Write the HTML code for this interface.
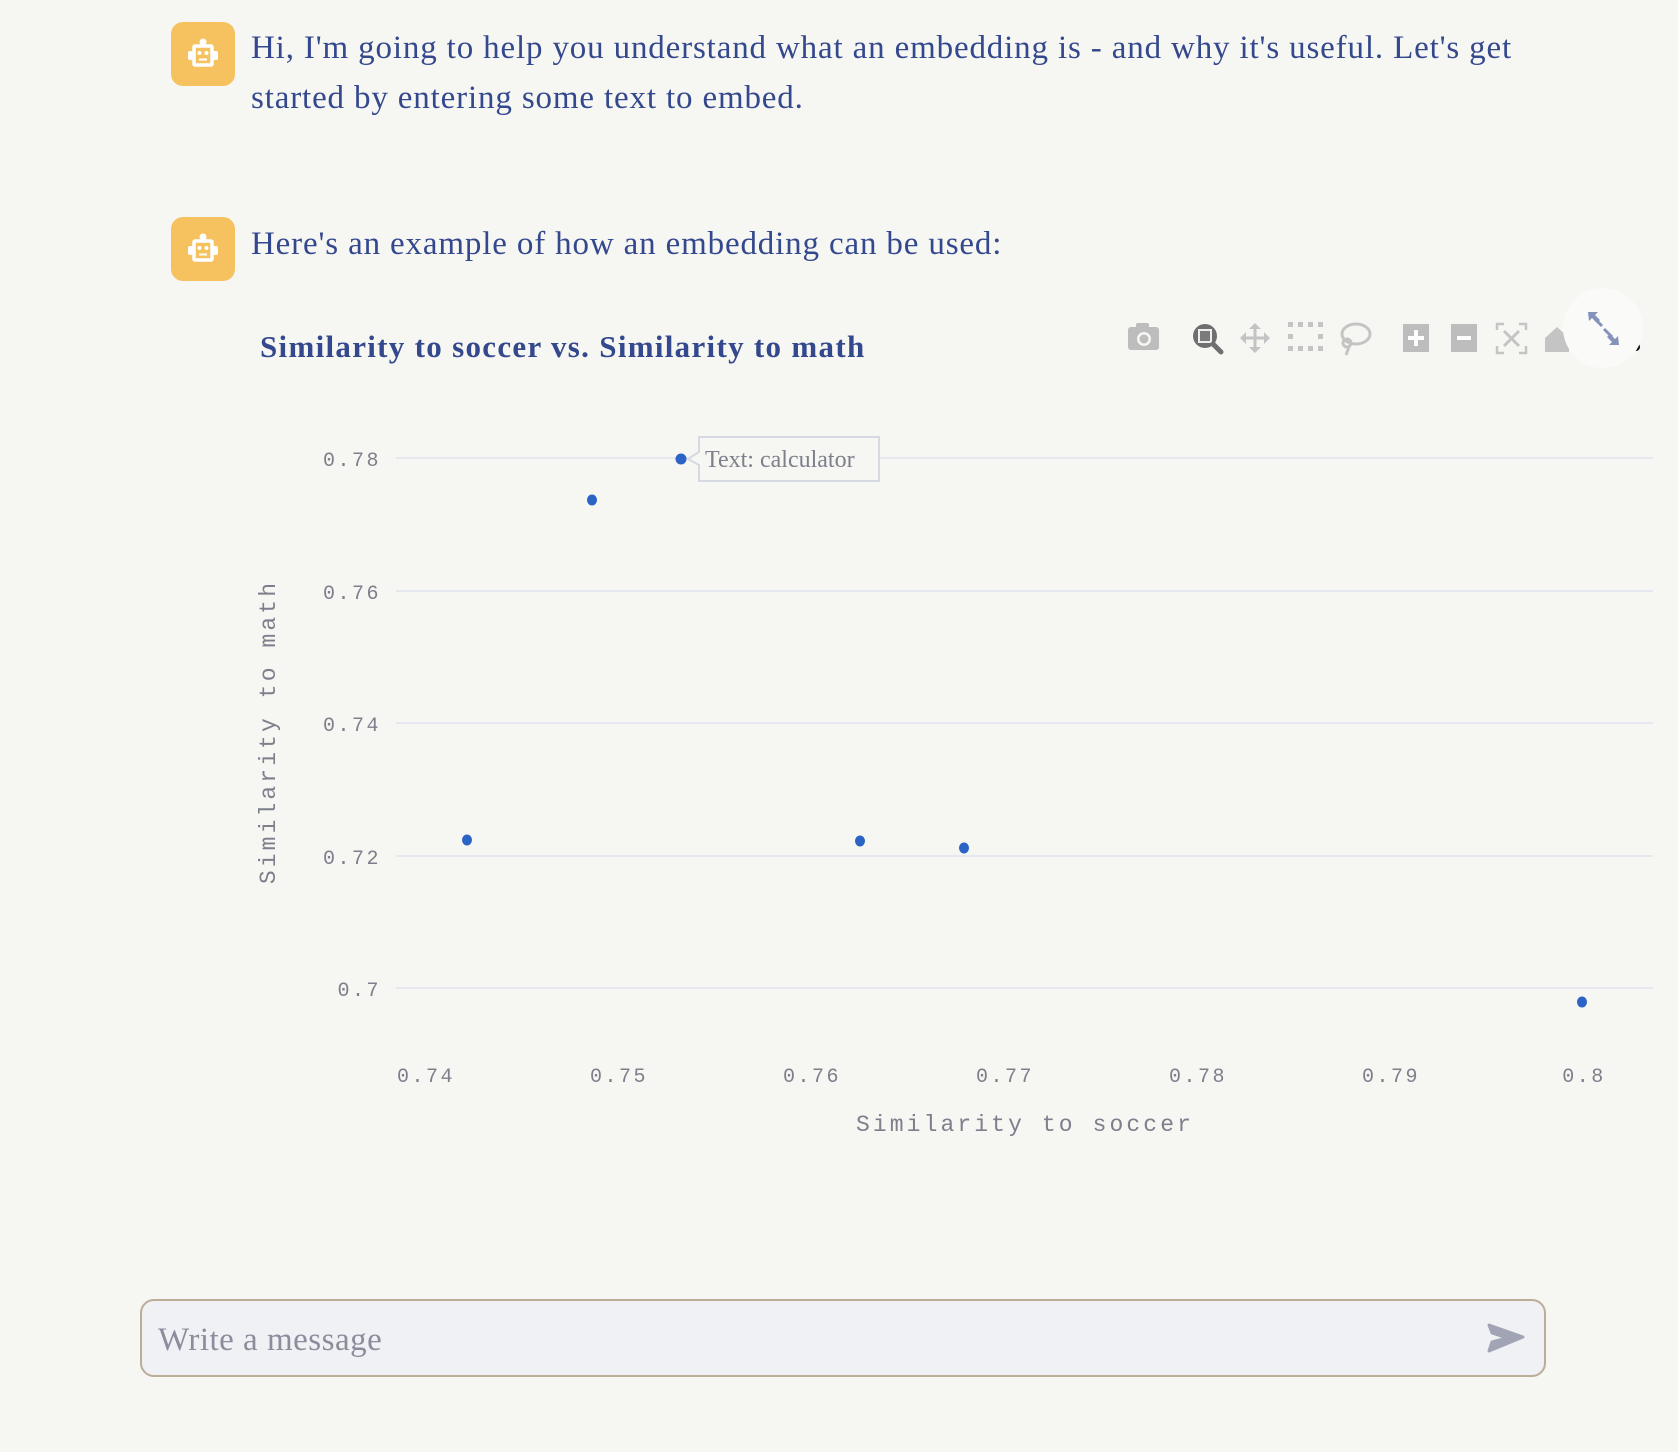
<!DOCTYPE html>
<html><head><meta charset="utf-8">
<style>
html,body{margin:0;padding:0;background:#f6f6f2;}
body{width:1678px;height:1452px;position:relative;overflow:hidden;font-family:"Liberation Serif",serif;color:#34488d;}
.av{position:absolute;left:171px;width:64px;height:64px;border-radius:12px;background:#f6c260;}
.av svg{position:absolute;left:14px;top:14px;}
.msg{position:absolute;left:251px;font-size:33px;letter-spacing:0.85px;line-height:50px;white-space:nowrap;}
.title{position:absolute;left:260px;top:329px;font-size:31px;font-weight:bold;letter-spacing:1.3px;white-space:nowrap;}
.input{position:absolute;left:140px;top:1299px;width:1402px;height:74px;border:2px solid #bcad99;border-radius:14px;background:#f0f1f4;}
.input span{position:absolute;left:16px;top:21px;font-size:33px;color:#8b8d9c;letter-spacing:0.5px;}
</style></head><body>

<div class="av" style="top:22px"><svg width="36" height="36" viewBox="0 0 36 36"><g fill="none" stroke="#fff" stroke-width="3.5"><rect x="9" y="10" width="18" height="19" rx="1"/></g><circle cx="18" cy="6" r="3.5" fill="#fff"/><rect x="3" y="15" width="5" height="9" rx="2" fill="#fff"/><rect x="28" y="15" width="5" height="9" rx="2" fill="#fff"/><circle cx="14.5" cy="17" r="2" fill="#fff"/><circle cx="21.5" cy="17" r="2" fill="#fff"/><rect x="14" y="22.5" width="8" height="2" fill="#fff"/></svg></div>
<div class="msg" style="top:23px">Hi, I'm going to help you understand what an embedding is - and why it's useful. Let's get<br>started by entering some text to embed.</div>

<div class="av" style="top:217px"><svg width="36" height="36" viewBox="0 0 36 36"><g fill="none" stroke="#fff" stroke-width="3.5"><rect x="9" y="10" width="18" height="19" rx="1"/></g><circle cx="18" cy="6" r="3.5" fill="#fff"/><rect x="3" y="15" width="5" height="9" rx="2" fill="#fff"/><rect x="28" y="15" width="5" height="9" rx="2" fill="#fff"/><circle cx="14.5" cy="17" r="2" fill="#fff"/><circle cx="21.5" cy="17" r="2" fill="#fff"/><rect x="14" y="22.5" width="8" height="2" fill="#fff"/></svg></div>
<div class="msg" style="top:219px">Here's an example of how an embedding can be used:</div>

<div class="title">Similarity to soccer vs. Similarity to math</div>

<div class="input"><span>Write a message</span></div>

<svg style="position:absolute;left:0;top:0" width="1678" height="1452">
 <g fill="#bdbdbd">
  <rect x="1128" y="327" width="31" height="23" rx="3"/><rect x="1136" y="323" width="13" height="6" rx="2"/>
  <circle cx="1144" cy="339" r="7" fill="#f6f6f2"/><circle cx="1144" cy="339" r="4.5"/>
 </g>
 <g><circle cx="1205" cy="336" r="12" fill="#6f6f6f"/><rect x="1199" y="330" width="12" height="12" fill="#7a7a7a" stroke="#eee" stroke-width="2"/><line x1="1213" y1="344" x2="1221" y2="352" stroke="#6f6f6f" stroke-width="5" stroke-linecap="round"/></g>
 <g stroke="#c4c4c4" stroke-width="3" fill="#c4c4c4"><line x1="1242" y1="338" x2="1268" y2="338"/><line x1="1255" y1="325" x2="1255" y2="351"/>
  <path d="M1240 338l6-6v12z M1270 338l-6-6v12z M1255 323l-6 6h12z M1255 353l-6-6h12z" stroke="none"/></g>
 <g fill="#c4c4c4"><rect x="1288" y="322" width="5" height="5"/><rect x="1298" y="322" width="5" height="5"/><rect x="1308" y="322" width="5" height="5"/><rect x="1318" y="322" width="5" height="5"/>
  <rect x="1288" y="346" width="5" height="5"/><rect x="1298" y="346" width="5" height="5"/><rect x="1308" y="346" width="5" height="5"/><rect x="1318" y="346" width="5" height="5"/>
  <rect x="1288" y="334" width="5" height="5"/><rect x="1318" y="334" width="5" height="5"/></g>
 <g fill="none" stroke="#c4c4c4" stroke-width="3"><ellipse cx="1356" cy="334" rx="14" ry="10"/><circle cx="1347" cy="343" r="4"/><path d="M1349 347l-3 8"/></g>
 <rect x="1403" y="324" width="26" height="28" fill="#bdbdbd"/><path d="M1416 330v16M1408 338h16" stroke="#fff" stroke-width="4"/>
 <rect x="1451" y="324" width="26" height="28" fill="#bdbdbd"/><path d="M1457 338h14" stroke="#fff" stroke-width="4"/>
 <g fill="none" stroke="#c4c4c4" stroke-width="2.5"><path d="M1497 330v-6h7M1519 324h7v6M1526 346v7h-7M1504 353h-7v-7"/><path d="M1504 331l15 15M1519 331l-15 15" stroke-width="3"/></g>
 <path d="M1545 338l12-11 12 11v14h-24z" fill="#c4c4c4"/>
 <circle cx="1636" cy="347" r="4" fill="#111"/>
 <circle cx="1603" cy="328" r="40" fill="#fafaf8"/>
 <g fill="#8593bb"><path d="M1588 312h10l-3 3 5 5-3 3-5-5-3 3z"/><path d="M1619 345h-10l3-3-5-5 3-3 5 5 3-3z"/><path d="M1594 318l8 8" stroke="#8593bb" stroke-width="3"/><path d="M1604 329l8 8" stroke="#8593bb" stroke-width="3"/></g>

 <g stroke="#e5e8ef" stroke-width="2">
  <line x1="396" y1="458" x2="1653" y2="458"/><line x1="396" y1="591" x2="1653" y2="591"/>
  <line x1="396" y1="723" x2="1653" y2="723"/><line x1="396" y1="856" x2="1653" y2="856"/>
  <line x1="396" y1="988" x2="1653" y2="988"/>
 </g>
 <g font-family="Liberation Mono, monospace" font-size="20" letter-spacing="2.5" fill="#7d7f8c" text-anchor="end">
  <text x="381" y="466">0.78</text><text x="381" y="599">0.76</text><text x="381" y="731">0.74</text>
  <text x="381" y="864">0.72</text><text x="381" y="996">0.7</text>
 </g>
 <g font-family="Liberation Mono, monospace" font-size="20" letter-spacing="2.5" fill="#7d7f8c" text-anchor="middle">
  <text x="426" y="1082">0.74</text><text x="619" y="1082">0.75</text><text x="812" y="1082">0.76</text>
  <text x="1005" y="1082">0.77</text><text x="1198" y="1082">0.78</text><text x="1391" y="1082">0.79</text>
  <text x="1584" y="1082">0.8</text>
 </g>
 <text x="1025" y="1131" font-family="Liberation Mono, monospace" font-size="23" letter-spacing="3.1" fill="#7d7f8c" text-anchor="middle">Similarity to soccer</text>
 <text transform="translate(275,732) rotate(-90)" font-family="Liberation Mono, monospace" font-size="23" letter-spacing="3.1" fill="#7d7f8c" text-anchor="middle">Similarity to math</text>

 <g fill="#2b63c7">
  <ellipse cx="467" cy="840" rx="5" ry="5.5"/><ellipse cx="592" cy="500" rx="5" ry="5.5"/>
  <ellipse cx="681" cy="459" rx="5.5" ry="5.5"/><ellipse cx="860" cy="841" rx="5" ry="5.5"/>
  <ellipse cx="964" cy="848" rx="5" ry="5.5"/><ellipse cx="1582" cy="1002" rx="5" ry="5.5"/>
 </g>
 <path d="M699 437H879V481H699V465L688 459L699 452Z" fill="#f6f6f2" stroke="#d5d9e3" stroke-width="2"/>
 <text x="705" y="467" font-family="Liberation Serif, serif" font-size="24" fill="#7d7f8c">Text: calculator</text>

 <path d="M1489 1325L1523 1337L1489 1351L1492 1342L1507 1338L1492 1333Z" fill="#a1a4b5" stroke="#a1a4b5" stroke-width="3" stroke-linejoin="round"/>
</svg>
</body></html>
